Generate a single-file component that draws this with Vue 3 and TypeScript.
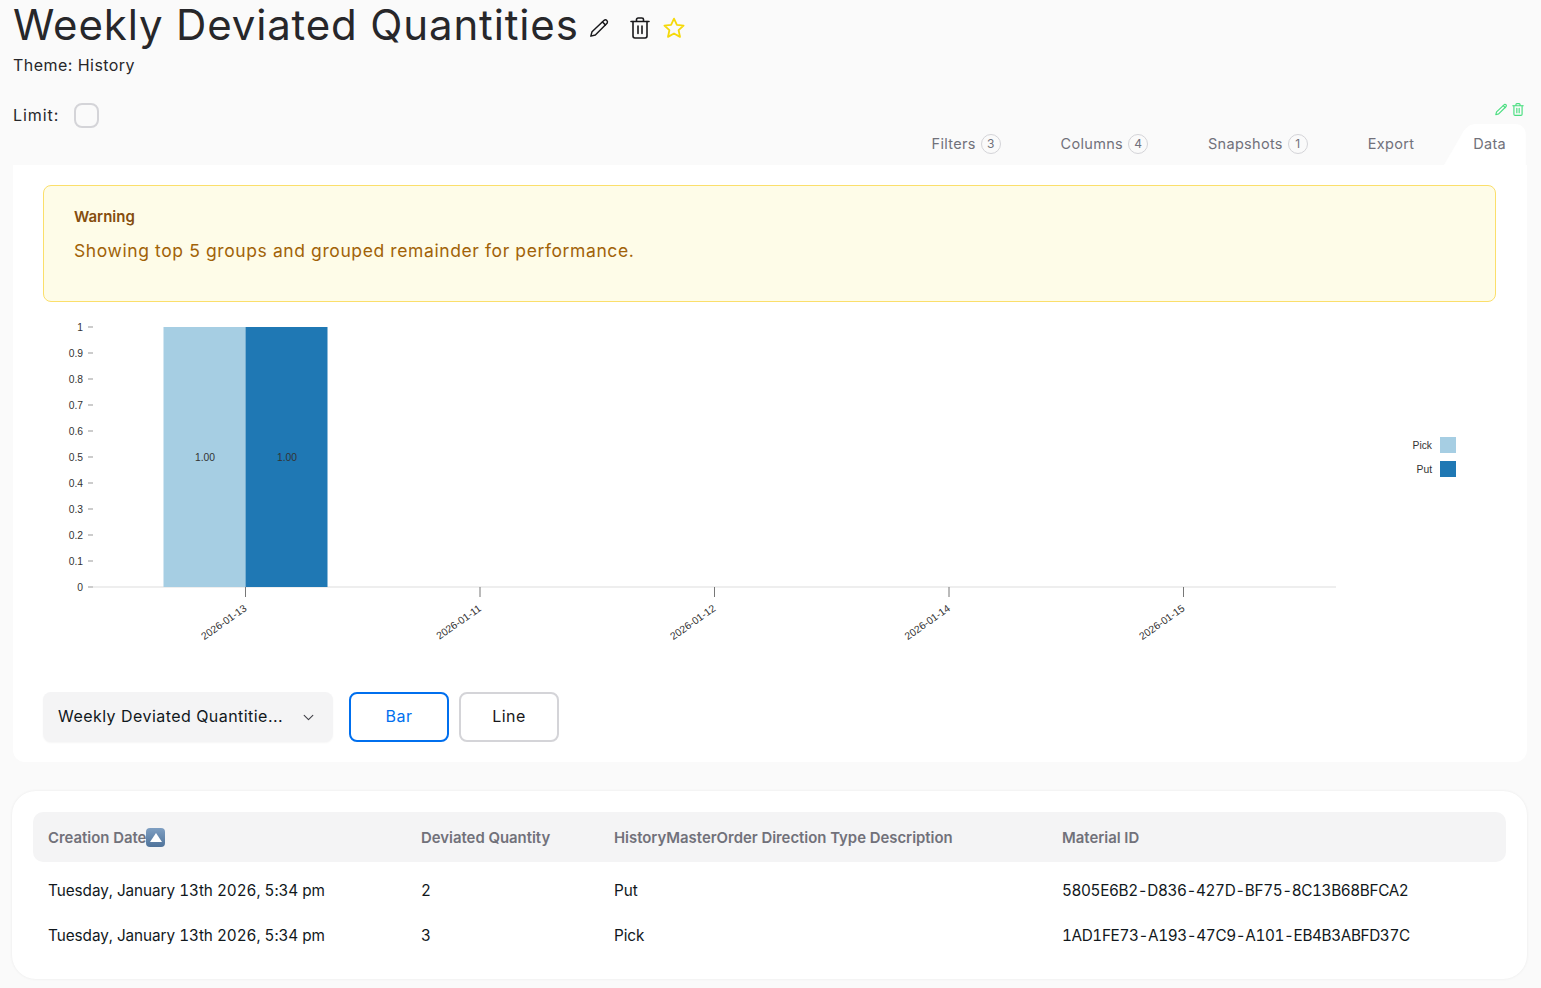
<script setup lang="ts">
const yTicks = ["1", "0.9", "0.8", "0.7", "0.6", "0.5", "0.4", "0.3", "0.2", "0.1", "0"].map(
  (label, i) => ({ label, y: 327 + i * 26 }),
);

const xTicks = [
  { label: "2026-01-13", x: 245.5 },
  { label: "2026-01-11", x: 480 },
  { label: "2026-01-12", x: 714.5 },
  { label: "2026-01-14", x: 949 },
  { label: "2026-01-15", x: 1183.5 },
];

const tabs = [
  { label: "Filters", count: 3 },
  { label: "Columns", count: 4 },
  { label: "Snapshots", count: 1 },
  { label: "Export" },
  { label: "Data", active: true },
];

const rows = [
  {
    date: "Tuesday, January 13th 2026, 5:34 pm",
    qty: 2,
    direction: "Put",
    material: "5805E6B2-D836-427D-BF75-8C13B68BFCA2",
  },
  {
    date: "Tuesday, January 13th 2026, 5:34 pm",
    qty: 3,
    direction: "Pick",
    material: "1AD1FE73-A193-47C9-A101-EB4B3ABFD37C",
  },
];
</script>

<template>
  <div class="page">
    <header class="head">
      <div class="title-row">
        <h1>Weekly Deviated Quantities</h1>
        <svg class="icon pencil" viewBox="0 0 24 24">
          <path d="M17.6 3.6a2.3 2.3 0 0 1 3.2 3.2L8 19.6l-4.9 1.3 1.3-4.9L17.6 3.6Z" />
          <path d="M15.8 5.4l3.2 3.2" />
        </svg>
        <svg class="icon trash" viewBox="0 0 24 24">
          <path d="M3 5.5h18M8.5 5.5V3.6c0-.9.7-1.6 1.6-1.6h3.8c.9 0 1.6.7 1.6 1.6v1.9" />
          <path d="M5 5.5v14.6c0 1 .9 1.9 1.9 1.9h10.2c1 0 1.9-.9 1.9-1.9V5.5" />
          <path d="M10 10v7.5M14 10v7.5" />
        </svg>
        <svg class="icon star" viewBox="0 0 24 24">
          <path d="M12 2.6l2.9 6.2 6.7.8-5 4.6 1.4 6.7-6-3.4-6 3.4 1.4-6.7-5-4.6 6.7-.8L12 2.6Z" />
        </svg>
      </div>
      <div class="theme">Theme: History</div>
    </header>

    <div class="limit-row">
      <span>Limit:</span>
      <span class="checkbox"></span>
    </div>

    <div class="tools">
      <div class="tool-icons">
        <svg class="icon green" viewBox="0 0 24 24">
          <path d="M17.6 3.6a2.3 2.3 0 0 1 3.2 3.2L8 19.6l-4.9 1.3 1.3-4.9L17.6 3.6Z" />
          <path d="M15.8 5.4l3.2 3.2" />
        </svg>
        <svg class="icon green" viewBox="0 0 24 24">
          <path d="M3 5.5h18M8.5 5.5V3.6c0-.9.7-1.6 1.6-1.6h3.8c.9 0 1.6.7 1.6 1.6v1.9" />
          <path d="M5 5.5v14.6c0 1 .9 1.9 1.9 1.9h10.2c1 0 1.9-.9 1.9-1.9V5.5" />
          <path d="M10 10v7.5M14 10v7.5" />
        </svg>
      </div>
      <nav class="tabs">
        <div v-for="tab in tabs" :key="tab.label" class="tab" :class="{ active: tab.active }">
          <svg v-if="tab.active" class="tab-bg" viewBox="0 0 83 41" preserveAspectRatio="none">
            <path d="M0 41L18 10C21 4 26 0 32 0H71C78 0 82 4 82 11V41Z" />
          </svg>
          <span class="tab-label">{{ tab.label }}</span>
          <span v-if="tab.count" class="badge">{{ tab.count }}</span>
        </div>
      </nav>
    </div>

    <section class="chart-card">
      <div class="alert">
        <div class="alert-title">Warning</div>
        <div class="alert-text">Showing top 5 groups and grouped remainder for performance.</div>
      </div>

      <svg class="chart" viewBox="43 302 1453 370">
        <g v-for="t in yTicks" :key="t.label">
          <line x1="88" x2="93" :y1="t.y" :y2="t.y" stroke="#bbb" stroke-width="1.5" />
          <text x="83" :y="t.y + 3.5" text-anchor="end" class="tick">{{ t.label }}</text>
        </g>
        <line x1="93" x2="1336" y1="587" y2="587" stroke="#eee" stroke-width="2" />
        <rect x="163.5" y="327" width="82" height="260" fill="#a6cee3" />
        <rect x="245.5" y="327" width="82" height="260" fill="#1f78b4" />
        <text x="205" y="461" text-anchor="middle" class="tick">1.00</text>
        <text x="287" y="461" text-anchor="middle" class="tick">1.00</text>
        <g v-for="t in xTicks" :key="t.label">
          <line :x1="t.x" :x2="t.x" y1="587" y2="597" stroke="#777" />
          <text
            class="tick"
            text-anchor="end"
            :transform="`translate(${t.x + 2} 610) rotate(-35)`"
          >{{ t.label }}</text>
        </g>
        <text x="1432" y="449" text-anchor="end" class="tick">Pick</text>
        <rect x="1440" y="437" width="16" height="16" fill="#a6cee3" />
        <text x="1432" y="473" text-anchor="end" class="tick">Put</text>
        <rect x="1440" y="461" width="16" height="16" fill="#1f78b4" />
      </svg>

      <div class="controls">
        <div class="select">
          <span class="select-value">Weekly Deviated Quantitie...</span>
          <svg class="chevron" viewBox="0 0 24 24"><path d="M4 8l8 8 8-8" /></svg>
        </div>
        <button class="btn primary">Bar</button>
        <button class="btn">Line</button>
      </div>
    </section>

    <section class="table-card">
      <table>
        <thead>
          <tr>
            <th class="col-date">
              <span class="th-sort">Creation Date<span class="sort-icon"><i></i></span></span>
            </th>
            <th class="col-qty">Deviated Quantity</th>
            <th class="col-dir">HistoryMasterOrder Direction Type Description</th>
            <th>Material ID</th>
          </tr>
        </thead>
        <tbody>
          <tr v-for="row in rows" :key="row.material">
            <td>{{ row.date }}</td>
            <td>{{ row.qty }}</td>
            <td>{{ row.direction }}</td>
            <td class="cell-id">{{ row.material }}</td>
          </tr>
        </tbody>
      </table>
    </section>
  </div>
</template>

<style>
html,
body {
  margin: 0;
  background: #fafafa;
}
</style>

<style scoped>
.page {
  width: 1541px;
  height: 988px;
  overflow: hidden;
  box-sizing: border-box;
  padding: 0 14px 0 13px;
  background: #fafafa;
  font-family: Inter, "Liberation Sans", sans-serif;
  color: #11181c;
}

.title-row {
  display: flex;
  align-items: center;
  height: 50px;
}

h1 {
  margin: 0;
  font-size: 42px;
  font-weight: 400;
  letter-spacing: 0.85px;
  line-height: 50px;
  color: #27272a;
  white-space: nowrap;
}

.icon {
  fill: none;
  stroke: currentColor;
  stroke-width: 1.6;
  stroke-linecap: round;
  stroke-linejoin: round;
  flex-shrink: 0;
}

.pencil {
  width: 22px;
  height: 22px;
  margin-left: 9px;
  margin-top: 6px;
  color: #18181b;
}

.trash {
  width: 24px;
  height: 24px;
  margin-left: 18px;
  margin-top: 6px;
  color: #18181b;
}

.star {
  width: 24px;
  height: 24px;
  margin-left: 10px;
  margin-top: 6px;
  stroke-width: 1.8;
  color: #f5d90a;
}

.theme {
  margin-top: 3px;
  font-size: 16px;
  letter-spacing: 0.45px;
  line-height: 24px;
  color: #27272a;
}

.limit-row {
  display: flex;
  align-items: center;
  gap: 15px;
  margin-top: 25px;
  height: 26px;
  font-size: 16px;
  letter-spacing: 0.95px;
  color: #27272a;
}

.checkbox {
  width: 21px;
  height: 21px;
  border: 2px solid #d4d4d8;
  border-radius: 8px;
}

.tools {
  position: relative;
  height: 37px;
}

.tool-icons {
  position: absolute;
  top: -26px;
  right: 2px;
  display: flex;
  gap: 3px;
}

.tool-icons .icon {
  width: 14px;
  height: 15px;
  stroke-width: 2;
}

.green {
  color: #4ade80;
}

.tabs {
  display: flex;
  justify-content: flex-end;
  height: 41px;
  position: absolute;
  right: 0;
  bottom: 0;
}

.tab {
  position: relative;
  display: flex;
  align-items: center;
  gap: 5px;
  padding: 0 30px 2px;
  font-size: 14.5px;
  letter-spacing: 0.3px;
  color: #71717a;
}

.tab.active {
  padding: 0 21px 2px 29px;
}

.tab-label {
  position: relative;
}

.tab-bg {
  position: absolute;
  left: 0;
  top: 0;
  width: 100%;
  height: 100%;
  fill: #fff;
}

.badge {
  box-sizing: border-box;
  width: 20px;
  height: 20px;
  border: 1px solid #d4d4d8;
  border-radius: 50%;
  display: flex;
  align-items: center;
  justify-content: center;
  font-size: 12px;
  letter-spacing: 0;
}

.chart-card {
  background: #fff;
  border-radius: 0 0 12px 12px;
  padding: 20px 30px;
  height: 597px;
  box-sizing: border-box;
}

.alert {
  box-sizing: border-box;
  width: 1453px;
  height: 117px;
  padding: 21px 30px;
  background: #fefce8;
  border: 1px solid #fbdf6b;
  border-radius: 8px;
}

.alert-title {
  font-size: 15px;
  font-weight: 600;
  line-height: 20px;
  color: #854d0e;
}

.alert-text {
  margin-top: 12px;
  font-size: 17.5px;
  letter-spacing: 0.6px;
  line-height: 24px;
  color: #a16207;
}

.chart {
  display: block;
  width: 1453px;
  height: 370px;
}

.tick {
  font-family: "Liberation Sans", Arial, sans-serif;
  font-size: 10.3px;
  fill: #333;
}

.controls {
  display: flex;
  align-items: center;
  gap: 10px;
  margin-top: 20px;
}

.select {
  box-sizing: border-box;
  width: 290px;
  height: 50px;
  margin-right: 6px;
  padding: 0 18px 2px 15px;
  display: flex;
  align-items: center;
  justify-content: space-between;
  background: #f4f4f5;
  border-radius: 8px;
  box-shadow: 0 1px 2px rgba(0, 0, 0, 0.04);
  font-size: 16px;
  letter-spacing: 0.45px;
}

.chevron {
  width: 13px;
  height: 13px;
  margin-top: 2px;
  fill: none;
  stroke: #3f3f46;
  stroke-width: 2;
  stroke-linecap: round;
  stroke-linejoin: round;
}

.btn {
  box-sizing: border-box;
  width: 100px;
  height: 50px;
  padding: 0 0 2px;
  background: #fff;
  border: 2px solid #d4d4d8;
  border-radius: 8px;
  font-family: inherit;
  font-size: 16px;
  letter-spacing: 0.5px;
  color: #18181b;
}

.btn.primary {
  border-color: #006fee;
  color: #006fee;
}

.table-card {
  margin: 29px 0 0 -1px;
  padding: 21px;
  height: 188px;
  box-sizing: border-box;
  background: #fff;
  border-radius: 24px;
  box-shadow: 0 0 3px rgba(0, 0, 0, 0.07);
}

table {
  width: 100%;
  border-collapse: separate;
  border-spacing: 0;
  table-layout: fixed;
}

th {
  height: 49px;
  padding: 1px 15px 0;
  background: #f4f4f5;
  text-align: left;
  font-size: 14.9px;
  font-weight: 600;
  color: #71717a;
  white-space: nowrap;
}

th:first-child {
  border-radius: 10px 0 0 10px;
}

th:last-child {
  border-radius: 0 10px 10px 0;
}

.col-date {
  width: 343px;
}

.col-qty {
  width: 163px;
}

.col-dir {
  width: 418px;
}

.th-sort {
  display: inline-flex;
  align-items: center;
}

.sort-icon {
  width: 19px;
  height: 19px;
  border-radius: 4px;
  background: linear-gradient(#7f9fc2, #4f739a);
  display: flex;
  align-items: center;
  justify-content: center;
}

.sort-icon i {
  width: 0;
  height: 0;
  border-left: 6px solid transparent;
  border-right: 6px solid transparent;
  border-bottom: 9px solid #fff;
}

td {
  height: 45px;
  padding: 0 15px;
  font-size: 15.3px;
  letter-spacing: -0.05px;
  font-variant-numeric: tabular-nums;
  color: #11181c;
  white-space: nowrap;
}

td.cell-id {
  letter-spacing: -0.38px;
}

tbody tr:first-child td {
  padding-top: 6px;
  height: 51px;
  box-sizing: border-box;
}
</style>
